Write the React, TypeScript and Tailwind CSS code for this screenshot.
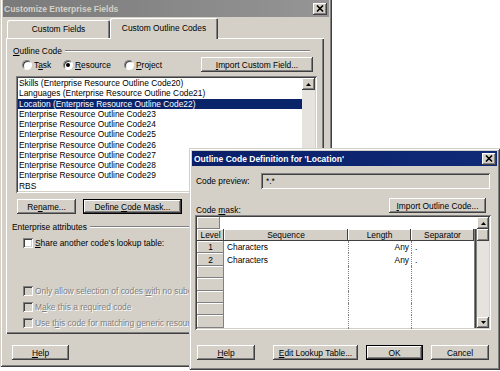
import React from "react";

const raised =
  "shadow-[inset_-1px_-1px_0_#404040,inset_1px_1px_0_#ffffff,inset_-2px_-2px_0_#808080]";
const sunken =
  "shadow-[inset_1px_1px_0_#808080,inset_-1px_-1px_0_#ffffff,inset_2px_2px_0_#404040,inset_-2px_-2px_0_#d4d0c8]";
const frame =
  "shadow-[inset_1px_1px_0_#d4d0c8,inset_-1px_-1px_0_#404040,inset_2px_2px_0_#ffffff,inset_-2px_-2px_0_#808080]";

function U({ children }: { children: React.ReactNode }) {
  return <span className="underline underline-offset-[1px]">{children}</span>;
}

function Btn({
  className,
  def,
  children,
}: {
  className: string;
  def?: boolean;
  children: React.ReactNode;
}) {
  return (
    <div
      className={`${className} h-[15px] shrink-0 bg-[#d4d0c8] ${
        def ? "border border-black" : ""
      }`}
    >
      <div
        className={`w-full h-full flex items-center justify-center whitespace-nowrap ${raised}`}
      >
        {children}
      </div>
    </div>
  );
}

function CloseBtn() {
  return (
    <div
      className={`w-[14px] h-[12px] shrink-0 bg-[#d4d0c8] ${raised} flex items-center justify-center`}
    >
      <svg width="8" height="7" viewBox="0 0 8 7">
        <path d="M1 0.5 L7 6.5 M7 0.5 L1 6.5" stroke="black" strokeWidth="1.6" />
      </svg>
    </div>
  );
}

function Arrow({ up, className }: { up?: boolean; className: string }) {
  return (
    <div
      className={`${className} shrink-0 bg-[#d4d0c8] ${raised} flex items-center justify-center`}
    >
      <svg width="5" height="3" viewBox="0 0 5 3">
        <path d={up ? "M2.5 0 L5 3 L0 3Z" : "M0 0 L5 0 L2.5 3Z"} fill="black" />
      </svg>
    </div>
  );
}

function Radio({ checked }: { checked?: boolean }) {
  return (
    <span className="w-[10px] h-[10px] shrink-0 rounded-full bg-white border border-t-[#808080] border-l-[#808080] border-b-white border-r-white shadow-[inset_1px_1px_0_#404040] flex items-center justify-center">
      {checked && <span className="w-[4px] h-[4px] rounded-full bg-black" />}
    </span>
  );
}

function Check({ disabled }: { disabled?: boolean }) {
  return (
    <span
      className={`w-[10px] h-[10px] shrink-0 ${
        disabled ? "bg-[#d4d0c8]" : "bg-white"
      } ${sunken}`}
    />
  );
}

const listItems = [
  "Skills (Enterprise Resource Outline Code20)",
  "Languages (Enterprise Resource Outline Code21)",
  "Location (Enterprise Resource Outline Code22)",
  "Enterprise Resource Outline Code23",
  "Enterprise Resource Outline Code24",
  "Enterprise Resource Outline Code25",
  "Enterprise Resource Outline Code26",
  "Enterprise Resource Outline Code27",
  "Enterprise Resource Outline Code28",
  "Enterprise Resource Outline Code29",
  "RBS",
];

const rows = [
  ["1", "Characters", "Any", "."],
  ["2", "Characters", "Any", "."],
  ["", "", "", ""],
  ["", "", "", ""],
  ["", "", "", ""],
  ["", "", "", ""],
  ["", "", "", ""],
];

function Dialog1() {
  return (
    <div
      className={`absolute left-0 top-[-3px] w-[332px] h-[370px] bg-[#d4d0c8] p-[3px] flex flex-col ${frame}`}
    >
      <div className="h-[17px] shrink-0 flex items-center justify-between pl-[1px] pr-[2px] bg-gradient-to-r from-[#7a7a7a] to-[#959595]">
        <span className="font-bold text-[8.5px] text-[#d4d0c8]">
          Customize Enterprise Fields
        </span>
        <CloseBtn />
      </div>
      {/* tabs */}
      <div className="mt-[1px] h-[20px] shrink-0 flex items-end pl-[4px]">
        <div className="w-[103px] h-[18px] rounded-t-[2px] flex items-center justify-center shadow-[inset_1px_1px_0_#ffffff,inset_-1px_0_0_#404040,inset_-2px_0_0_#808080]">
          Custom Fields
        </div>
        <div className="relative z-10 w-[108px] h-[21px] mb-[-1px] rounded-t-[2px] bg-[#d4d0c8] flex items-center justify-center pb-[2px] shadow-[inset_1px_1px_0_#ffffff,inset_-1px_0_0_#404040,inset_-2px_0_0_#808080]">
          Custom Outline Codes
        </div>
      </div>
      {/* panel */}
      <div className="ml-[3px] w-[318px] h-[296px] shrink-0 flex flex-col shadow-[inset_1px_1px_0_#ffffff,inset_-1px_-1px_0_#404040,inset_-2px_-2px_0_#808080]">
        <div className="mt-[8px] h-[10px] flex items-center ml-[7px] mr-[14px]">
          <span>
            <U>O</U>utline Code
          </span>
          <div className="flex-1 ml-[3px] h-0 border-t border-t-[#808080] border-b border-b-white" />
        </div>
        <div className="mt-[1px] h-[15px] flex items-center">
          <div className="ml-[16px] w-[41px] flex items-center gap-[2px]">
            <Radio />
            <span>
              T<U>a</U>sk
            </span>
          </div>
          <div className="w-[61px] flex items-center gap-[2px]">
            <Radio checked />
            <span>
              <U>R</U>esource
            </span>
          </div>
          <div className="flex items-center gap-[2px]">
            <Radio />
            <span>
              <U>P</U>roject
            </span>
          </div>
          <Btn className="ml-auto mr-[11px] w-[112px]">
            <span>
              <U>I</U>mport Custom Field...
            </span>
          </Btn>
        </div>
        <div
          className={`mt-[4px] ml-[10px] w-[301px] h-[117px] bg-white p-[2px] flex ${sunken}`}
        >
          <div className="flex-1 flex flex-col overflow-hidden">
            {listItems.map((t, i) => (
              <div
                key={i}
                className={`h-[10.25px] leading-[10.25px] pl-[1px] whitespace-nowrap ${
                  i === 2 ? "bg-[#0a246a] text-white" : ""
                }`}
              >
                {t}
              </div>
            ))}
          </div>
          <div className="w-[13px] flex flex-col">
            <Arrow up className="h-[12px] w-[13px]" />
            <div className="flex-1 bg-[#e6e3de]" />
          </div>
        </div>
        <div className="mt-[6px] h-[15px] flex">
          <Btn className="ml-[11px] w-[59px]">
            <span>
              Re<U>n</U>ame...
            </span>
          </Btn>
          <Btn className="ml-[7px] w-[99px]" def>
            <span>
              Define <U>C</U>ode Mask...
            </span>
          </Btn>
        </div>
        <div className="mt-[8px] h-[10px] flex items-center ml-[6px] mr-[14px]">
          <span>Enterprise attributes</span>
          <div className="flex-1 ml-[3px] h-0 border-t border-t-[#808080] border-b border-b-white" />
        </div>
        <div className="mt-[6px] h-[10px] ml-[17px] flex items-center gap-[2px]">
          <Check />
          <span>
            <U>S</U>hare another code's lookup table:
          </span>
        </div>
        {[
          <span key="a">
            Only allow selection of codes <U>w</U>ith no subordinate values
          </span>,
          <span key="b">
            M<U>a</U>ke this a required code
          </span>,
          <span key="c">
            Use t<U>h</U>is code for matching generic resources
          </span>,
        ].map((el, i) => (
          <div
            key={i}
            className={`${
              i === 0 ? "mt-[38px]" : "mt-[6px]"
            } h-[10px] ml-[17px] flex items-center gap-[2px] whitespace-nowrap text-[#808080] [text-shadow:1px_1px_0_#ffffff]`}
          >
            <Check disabled />
            {el}
          </div>
        ))}
      </div>
      <Btn className="mt-[11px] ml-[9px] w-[57px]">
        <span>
          <U>H</U>elp
        </span>
      </Btn>
    </div>
  );
}

function Dialog2() {
  return (
    <div
      className={`absolute left-[189px] top-[148px] w-[311px] h-[222px] bg-[#d4d0c8] p-[3px] flex flex-col ${frame}`}
    >
      <div className="h-[15px] shrink-0 flex items-center justify-between pl-[2px] pr-[1px] bg-gradient-to-r from-[#0a1f68] to-[#102a78]">
        <span className="font-bold text-[8.5px] text-white">
          Outline Code Definition for 'Location'
        </span>
        <CloseBtn />
      </div>
      <div className="mt-[7px] h-[16px] shrink-0 flex items-center">
        <span className="ml-[4px] w-[65px]">Code preview:</span>
        <div
          className={`w-[229px] h-full bg-[#d4d0c8] pl-[5px] flex items-center ${sunken}`}
        >
          *.*
        </div>
      </div>
      <div className="mt-[9px] h-[17px] shrink-0 flex justify-between">
        <span className="self-end ml-[4px] leading-[10px]">
          Code <U>m</U>ask:
        </span>
        <Btn className="self-start mr-[11px] w-[97px]">
          <span>
            <U>I</U>mport Outline Code...
          </span>
        </Btn>
      </div>
      <div
        className={`ml-[3px] w-[296px] h-[115px] shrink-0 p-[2px] bg-white flex ${sunken}`}
      >
        <div className="w-[280px] flex flex-col">
          <div className="h-[12px] flex shrink-0">
            <div
              className={`w-[23px] h-full bg-[#d4d0c8] shadow-[inset_-1px_-1px_0_#808080,inset_1px_1px_0_#ffffff]`}
            />
            <div className="flex-1 bg-white" />
          </div>
          <div className="flex flex-1">
            <div className="w-[277px] flex flex-col">
              <div className="h-[12px] grid grid-cols-[27px_124px_63px_63px] shrink-0">
                {["Level", "Sequence", "Length", "Separator"].map((h) => (
                  <div
                    key={h}
                    className="bg-[#d4d0c8] flex items-center justify-center shadow-[inset_-1px_-1px_0_#404040,inset_1px_1px_0_#ffffff]"
                  >
                    {h}
                  </div>
                ))}
              </div>
              {rows.map((r, i) => (
                <div
                  key={i}
                  className="h-[12.4px] grid grid-cols-[27px_124px_63px_63px] shrink-0"
                >
                  <div className="bg-[#d4d0c8] flex items-center justify-center shadow-[inset_-1px_-1px_0_#808080,inset_1px_1px_0_#ffffff]">
                    {r[0]}
                  </div>
                  <div className="pl-[3px] flex items-center">{r[1]}</div>
                  <div className="border-l border-dotted border-[#808080] pr-[2px] flex items-center justify-end">
                    {r[2]}
                  </div>
                  <div className="border-l border-dotted border-[#808080] pl-[3px] flex items-center">
                    {r[3]}
                  </div>
                </div>
              ))}
              <div className="flex-1 grid grid-cols-[27px_124px_63px_63px]">
                <div className="bg-[#d4d0c8]" />
                <div />
                <div className="border-l border-dotted border-[#808080]" />
                <div className="border-l border-dotted border-[#808080]" />
              </div>
            </div>
            <div className="w-[3px] bg-[#404040] border-x border-[#808080]" />
          </div>
        </div>
        <div className="w-[12px] flex flex-col">
          <Arrow up className="h-[12px] w-[12px]" />
          <div className={`h-[12px] w-[12px] bg-[#d4d0c8] ${raised}`} />
          <div className="flex-1 bg-[#e6e3de]" />
          <Arrow className="h-[11px] w-[12px]" />
        </div>
      </div>
      <div className="mt-[15px] h-[15px] shrink-0 flex">
        <Btn className="ml-[5px] w-[58px]">
          <span>
            <U>H</U>elp
          </span>
        </Btn>
        <Btn className="ml-[18px] w-[85px]">
          <span>
            <U>E</U>dit Lookup Table...
          </span>
        </Btn>
        <Btn className="ml-[8px] w-[57px]" def>
          <span>OK</span>
        </Btn>
        <Btn className="ml-[8px] w-[58px]">
          <span>Cancel</span>
        </Btn>
      </div>
    </div>
  );
}

export default function App() {
  return (
    <div className="relative w-[500px] h-[371px] overflow-hidden bg-white font-['Liberation_Sans',Arial,sans-serif] text-[8.4px] leading-[10px] text-black">
      <Dialog1 />
      <Dialog2 />
    </div>
  );
}
